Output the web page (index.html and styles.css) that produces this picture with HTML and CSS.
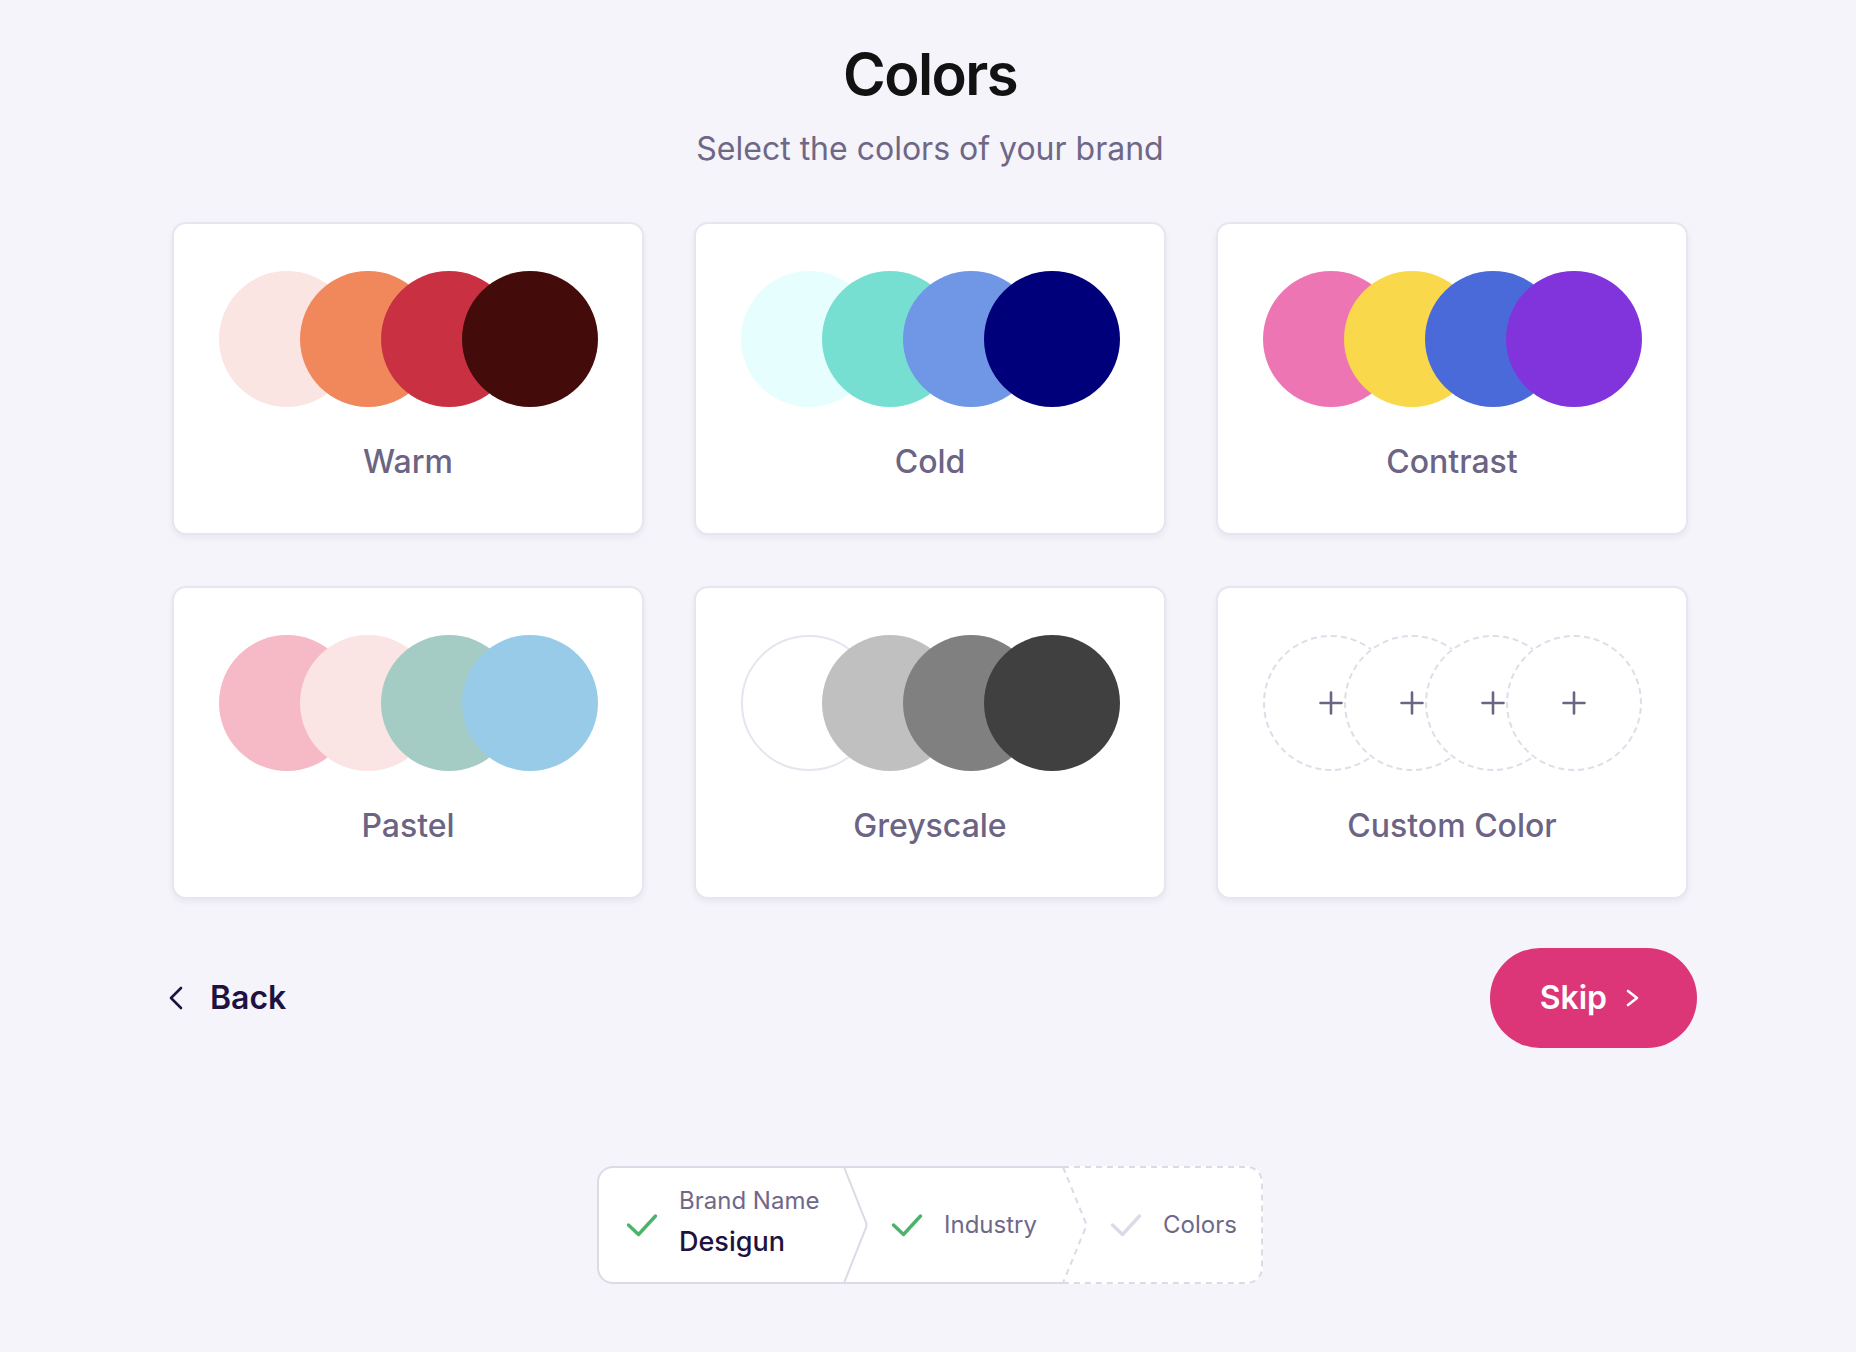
FILE: index.html
```html
<!DOCTYPE html>
<html lang="en">
<head>
<meta charset="utf-8">
<title>Colors</title>
<link rel="stylesheet" href="styles.css">
</head>
<body>
<main class="page">
  <h1 class="title">Colors</h1>
  <p class="subtitle">Select the colors of your brand</p>

  <section class="grid">
    <div class="card">
      <div class="swatches">
        <span class="dot" style="background:#fae5e3"></span>
        <span class="dot" style="background:#f0885c"></span>
        <span class="dot" style="background:#c93142"></span>
        <span class="dot" style="background:#430b09"></span>
      </div>
      <div class="label">Warm</div>
    </div>
    <div class="card">
      <div class="swatches">
        <span class="dot" style="background:#e6fefe"></span>
        <span class="dot" style="background:#76dfd1"></span>
        <span class="dot" style="background:#7096e6"></span>
        <span class="dot" style="background:#01007b"></span>
      </div>
      <div class="label">Cold</div>
    </div>
    <div class="card">
      <div class="swatches">
        <span class="dot" style="background:#ee75b3"></span>
        <span class="dot" style="background:#f9d84b"></span>
        <span class="dot" style="background:#4a6ad9"></span>
        <span class="dot" style="background:#8134db"></span>
      </div>
      <div class="label">Contrast</div>
    </div>
    <div class="card">
      <div class="swatches">
        <span class="dot" style="background:#f5bac5"></span>
        <span class="dot" style="background:#fbe4e4"></span>
        <span class="dot" style="background:#a4cbc4"></span>
        <span class="dot" style="background:#97cbe8"></span>
      </div>
      <div class="label">Pastel</div>
    </div>
    <div class="card">
      <div class="swatches">
        <span class="dot dot-outline"></span>
        <span class="dot" style="background:#c0c0c0"></span>
        <span class="dot" style="background:#808080"></span>
        <span class="dot" style="background:#404040"></span>
      </div>
      <div class="label">Greyscale</div>
    </div>
    <div class="card">
      <div class="swatches">
        <span class="dot dot-add"><svg class="plus" viewBox="0 0 24 24"><path d="M12 1.5V22.5M1.5 12H22.5"/></svg></span>
        <span class="dot dot-add"><svg class="plus" viewBox="0 0 24 24"><path d="M12 1.5V22.5M1.5 12H22.5"/></svg></span>
        <span class="dot dot-add"><svg class="plus" viewBox="0 0 24 24"><path d="M12 1.5V22.5M1.5 12H22.5"/></svg></span>
        <span class="dot dot-add"><svg class="plus" viewBox="0 0 24 24"><path d="M12 1.5V22.5M1.5 12H22.5"/></svg></span>
      </div>
      <div class="label">Custom Color</div>
    </div>
  </section>

  <nav class="nav">
    <button class="back" type="button">
      <svg class="back-icon" viewBox="0 0 14 24"><path d="M12 2L2 12L12 22"/></svg>
      <span>Back</span>
    </button>
    <button class="skip" type="button">
      <span>Skip</span>
      <svg class="skip-icon" viewBox="0 0 14 18"><path d="M2 2L11 9L2 16"/></svg>
    </button>
  </nav>

  <div class="stepper">
    <svg class="stepper-outline" viewBox="0 0 666 118" preserveAspectRatio="none">
      <path class="solid" d="M466 1H16A15 15 0 0 0 1 16V102A15 15 0 0 0 16 117H466"/>
      <path class="solid" d="M247 1L268.5 55Q270.5 59 268.5 63L247 117"/>
      <path class="dashed" d="M466 1H650A15 15 0 0 1 665 16V102A15 15 0 0 1 650 117H466"/>
      <path class="dashed" d="M466 1L488 55Q490 59 488 63L466 117"/>
    </svg>
    <div class="step step-1">
      <svg class="check done" viewBox="0 0 32 24"><path d="M2.5 12L12.5 21.5L29.5 3"/></svg>
      <div class="step-text">
        <div class="step-caption">Brand Name</div>
        <div class="step-value">Desigun</div>
      </div>
    </div>
    <div class="step step-2">
      <svg class="check done" viewBox="0 0 32 24"><path d="M2.5 12L12.5 21.5L29.5 3"/></svg>
      <div class="step-caption">Industry</div>
    </div>
    <div class="step step-3">
      <svg class="check todo" viewBox="0 0 32 24"><path d="M2.5 12L12.5 21.5L29.5 3"/></svg>
      <div class="step-caption">Colors</div>
    </div>
  </div>
</main>
</body>
</html>
```

FILE: styles.css
```css
* { box-sizing: border-box; }

html, body {
  margin: 0;
  padding: 0;
}

body {
  background: #f5f4fa;
  font-family: Inter, "Noto Sans", "Liberation Sans", sans-serif;
  color: #1e1340;
}

.page {
  display: flex;
  flex-direction: column;
  align-items: center;
  padding-top: 38px;
  padding-left: 4px;
}

.title {
  margin: 0;
  font-size: 58px;
  line-height: 72px;
  font-weight: 600;
  color: #121212;
  letter-spacing: -1.6px;
}

.subtitle {
  margin: 19px 0 0;
  font-size: 32px;
  line-height: 40px;
  font-weight: 400;
  color: #6e6786;
}

.grid {
  margin-top: 53px;
  width: 1516px;
  display: grid;
  grid-template-columns: repeat(3, 1fr);
  column-gap: 50px;
  row-gap: 51px;
}

.card {
  height: 313px;
  background: #ffffff;
  border: 2px solid #e7e5ef;
  border-radius: 14px;
  box-shadow: 0 3px 6px rgba(40, 30, 90, 0.06);
  padding-top: 47px;
  display: flex;
  flex-direction: column;
  align-items: center;
}

.swatches {
  display: flex;
  height: 136px;
}

.dot {
  width: 136px;
  height: 136px;
  border-radius: 50%;
  flex: none;
  position: relative;
}

.dot + .dot {
  margin-left: -55px;
}

.dot-outline {
  background: #ffffff;
  border: 2px solid #e6e4ee;
}

.dot-add {
  background: #ffffff;
  border: 2px dashed #dfdde8;
  display: flex;
  align-items: center;
  justify-content: center;
}

.plus {
  width: 24px;
  height: 24px;
  fill: none;
  stroke: #6b6485;
  stroke-width: 2.6;
  stroke-linecap: round;
}

.label {
  margin-top: 35px;
  font-size: 32px;
  line-height: 40px;
  font-weight: 450;
  color: #6b6485;
}

.nav {
  width: 1516px;
  margin-top: 49px;
  display: flex;
  justify-content: space-between;
  align-items: center;
}

.back {
  display: flex;
  align-items: center;
  gap: 27px;
  margin-left: -3px;
  padding: 0;
  border: 0;
  background: transparent;
  font-family: inherit;
  font-size: 32px;
  line-height: 40px;
  font-weight: 600;
  color: #1e1340;
}

.back-icon {
  width: 14px;
  height: 24px;
  fill: none;
  stroke: #1e1340;
  stroke-width: 2.6;
  stroke-linecap: round;
  stroke-linejoin: round;
}

.skip {
  display: flex;
  align-items: center;
  gap: 19px;
  height: 100px;
  margin-right: -9px;
  padding: 0 57px 0 50px;
  border: 0;
  border-radius: 50px;
  background: #dc3578;
  color: #ffffff;
  font-family: inherit;
  font-size: 32px;
  line-height: 40px;
  font-weight: 600;
}

.skip-icon {
  width: 14px;
  height: 18px;
  fill: none;
  stroke: #ffffff;
  stroke-width: 2.6;
  stroke-linecap: round;
  stroke-linejoin: round;
}

.stepper {
  position: relative;
  margin-top: 118px;
  width: 666px;
  height: 118px;
  background: #ffffff;
  border-radius: 16px;
  display: flex;
}

.stepper-outline {
  position: absolute;
  inset: 0;
  width: 666px;
  height: 118px;
  fill: none;
  stroke: #dcdae6;
  stroke-width: 2;
}

.stepper-outline .dashed {
  stroke-dasharray: 6 5;
}

.step {
  position: relative;
  display: flex;
  align-items: center;
  gap: 21px;
  height: 118px;
}

.step-1 { width: 247px; padding-left: 29px; }
.step-2 { width: 219px; padding-left: 47px; }
.step-3 { width: 200px; padding-left: 47px; }

.check {
  width: 32px;
  height: 24px;
  flex: none;
  fill: none;
  stroke-width: 3.4;
  stroke-linecap: round;
  stroke-linejoin: round;
}

.check.done { stroke: #4bb36b; }
.check.todo { stroke: #dcdae5; }

.step-text {
  margin-bottom: 6px;
}

.step-caption {
  font-size: 24px;
  line-height: 30px;
  font-weight: 400;
  color: #6f6888;
}

.step-value {
  margin-top: 10px;
  font-size: 27px;
  line-height: 32px;
  font-weight: 450;
  color: #1e1340;
}
```
